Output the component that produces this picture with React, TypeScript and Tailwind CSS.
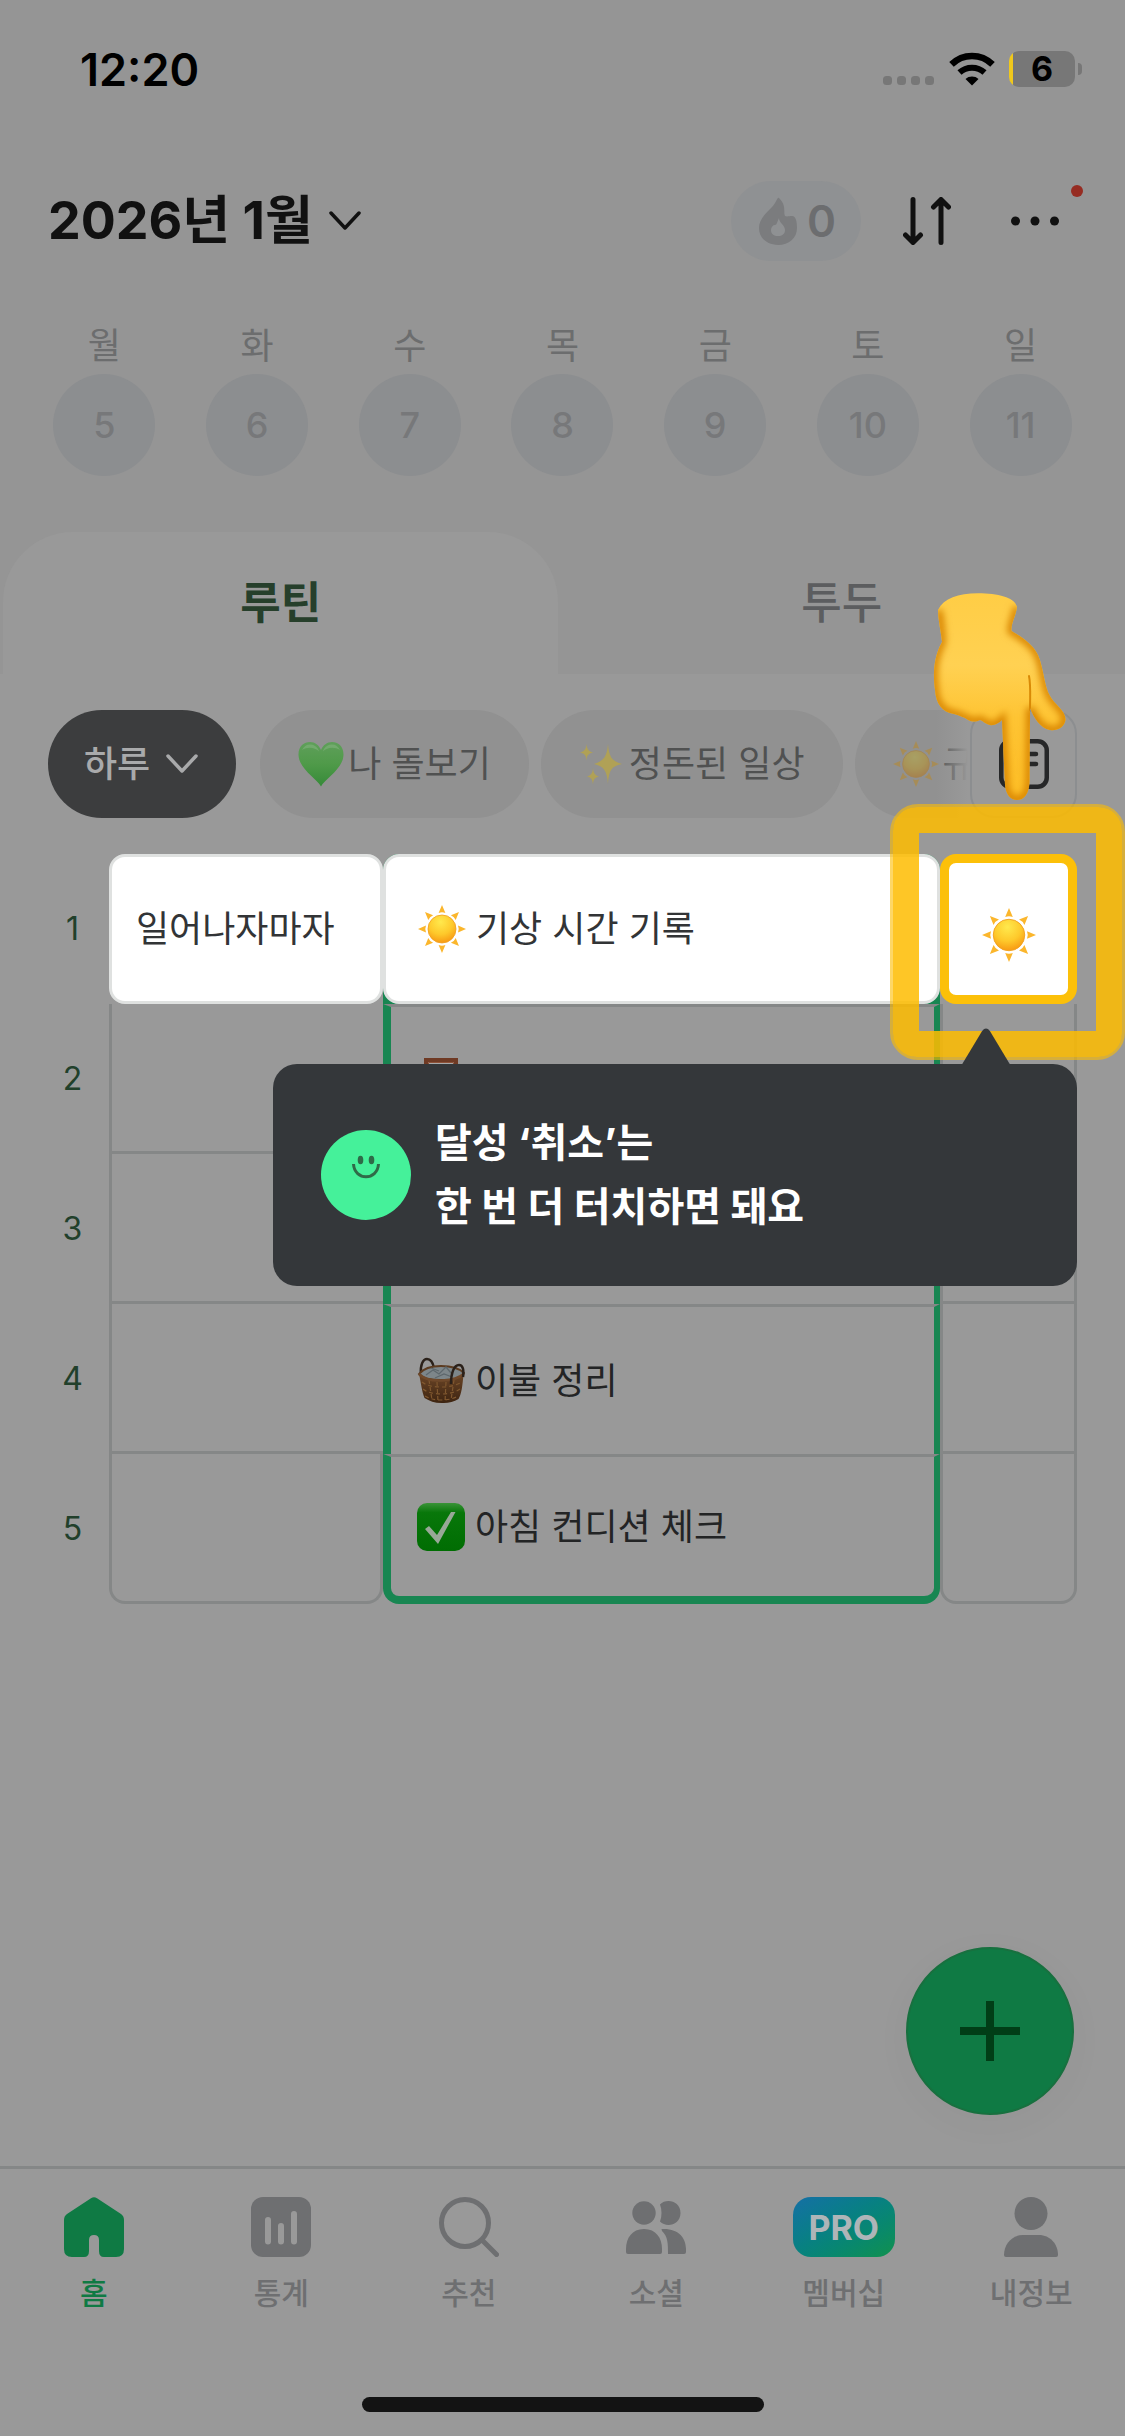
import { useId, useState, type ReactNode } from "react";

const DAYS = [
  { label: "월", date: 5 },
  { label: "화", date: 6 },
  { label: "수", date: 7 },
  { label: "목", date: 8 },
  { label: "금", date: 9 },
  { label: "토", date: 10 },
  { label: "일", date: 11 },
];

function Sun({ className }: { className?: string }) {
  const id = useId();
  return (
    <svg viewBox="0 0 48 48" className={className} aria-hidden="true">
      <defs>
        <radialGradient id={id} cx="0.45" cy="0.25" r="0.8">
          <stop offset="0" stopColor="#ffe94d" />
          <stop offset="0.55" stopColor="#fec92b" />
          <stop offset="1" stopColor="#f7930f" />
        </radialGradient>
      </defs>
      {[0, 45, 90, 135, 180, 225, 270, 315].map((deg) => (
        <path key={deg} d="M24 0 L27.4 8 Q24 6.6 20.6 8 Z" fill="#fbb62c" transform={`rotate(${deg} 24 24)`} />
      ))}
      <circle cx="24" cy="24" r="14" fill={`url(#${id})`} stroke="#f0a01f" strokeWidth="0.8" />
    </svg>
  );
}

function Heart({ className }: { className?: string }) {
  return (
    <svg viewBox="0 0 46 46" className={className} aria-hidden="true">
      <defs>
        <linearGradient id="heart" x1="0" y1="0" x2="0" y2="1">
          <stop offset="0" stopColor="#5f9f5a" />
          <stop offset="0.5" stopColor="#4f9a49" />
          <stop offset="1" stopColor="#358a38" />
        </linearGradient>
      </defs>
      <path
        d="M23 45.500C19 38 1 28 .5 14C.3 5 6 1 12 1c5 0 9 3 11 8c2-5 6-8 11-8c6 0 11.700 4 11.500 13C45 28 27 38 23 45.500Z"
        fill="url(#heart)"
      />
      <path d="M4 9c2-4 5-6 9-5.500c4 .5 7 3 8 7c-4-4-11-5-17-1.500ZM42 9c-2-4-5-6-9-5.500c-4 .5-7 3-8 7c4-4 11-5 17-1.500Z" fill="#82b27d" opacity="0.6" />
    </svg>
  );
}

function Sparkles({ className }: { className?: string }) {
  return (
    <svg viewBox="0 0 46 46" className={className} fill="#b0a156" aria-hidden="true">
      <path d="M29 3c1 12 3 17 14 20c-11 2-13 7-14 20c-1-13-4-18-14-20c10-3 13-8 14-20Z" />
      <path d="M7.500 3c.6 5 1.500 7 6.500 8.500c-5 1-6 3-6.500 8c-.6-5-1.500-7-6.500-8c5-1.500 6-3.500 6.500-8.500Z" />
      <path d="M14 27c.6 5 1.500 7 6 8.500c-4.500 1-5.500 3-6 8c-.6-5-1.500-7-6-8c4.500-1.500 5.500-3.500 6-8.500Z" />
    </svg>
  );
}

function Mirror() {
  return (
    <svg viewBox="0 0 48 48" className="size-12" aria-hidden="true">
      <path d="M9 3h30v42H9Z" fill="#a7a9a9" stroke="#6f3a24" strokeWidth="4" />
      <path d="M11.500 5.500h25v37h-25Z" fill="none" stroke="#8d5138" strokeWidth="1" />
    </svg>
  );
}

function Basket() {
  return (
    <svg viewBox="0 0 48 48" className="size-12" fill="none" aria-hidden="true">
      <defs>
        <linearGradient id="basket" x1="0" y1="0" x2="0" y2="1">
          <stop offset="0" stopColor="#6b4526" />
          <stop offset="1" stopColor="#3d2411" />
        </linearGradient>
      </defs>
      <path d="M4 17C3 8 6 2 10 2c4 0 6 4 7 9" stroke="#2b211a" strokeWidth="2.500" />
      <path d="M2 17c4-5 11-8 22-8c12 0 19 3 23 7c-2 6-12 8-23 7C13 23 5 21 2 17Z" fill="#7d868a" stroke="#5c3b20" strokeWidth="2" />
      <path d="M9 18l7-5 6 4 7-7 5 6M18 21l9-4 8 3M14 11l8 3" stroke="#5d676c" strokeWidth="1.200" />
      <path d="M2 17c5 5 13 7 23 6.500c10-.5 18-3 21.500-6.500c-1 12-2 20-5 25c-5 3-11 4.500-17 4c-7 0-12-2-17-5C5 35 4 26 2 17Z" fill="url(#basket)" />
      <path
        d="M5 25c5 4 12 5 20 5s15-2 20-5M6 32c5 4 12 5 19 5s14-2 18-5M8 39c5 3 10 4 17 4s13-2 16-4M12 23l3 20M20 25l1 20M29 25l-1 20M37 23l-3 20"
        stroke="#80582f"
        strokeWidth="1.200"
        strokeDasharray="4 3"
      />
      <path d="M2 17c5 5 13 7 23 6.500c10-.5 18-3 21.500-6.500" stroke="#70492a" strokeWidth="2.500" />
      <path d="M34 27C34 16 37 8 42 8c4 0 5 5 4 12" stroke="#2b211a" strokeWidth="2.500" />
    </svg>
  );
}

function CheckBadge() {
  return (
    <svg viewBox="0 0 48 48" className="size-12" aria-hidden="true">
      <defs>
        <linearGradient id="check" x1="0" y1="0" x2="0" y2="1">
          <stop offset="0" stopColor="#3a9338" />
          <stop offset="0.2" stopColor="#08770a" />
          <stop offset="1" stopColor="#006d02" />
        </linearGradient>
      </defs>
      <rect width="48" height="48" rx="10" fill="url(#check)" />
      <path d="M8 26l4-3 8 9L34 9h4.500L21 41Z" fill="#98a897" />
    </svg>
  );
}

function PointingHand({ className }: { className?: string }) {
  return (
    <svg viewBox="0 0 138 210" className={className} aria-hidden="true">
      <defs>
        <linearGradient id="palm" x1="0" y1="0" x2="0" y2="1">
          <stop offset="0" stopColor="#ffcd45" />
          <stop offset="0.35" stopColor="#ffd152" />
          <stop offset="0.6" stopColor="#fec433" />
          <stop offset="1" stopColor="#fdbd24" />
        </linearGradient>
        <filter id="soft" x="-20%" y="-20%" width="140%" height="140%">
          <feGaussianBlur stdDeviation="3.500" />
        </filter>
        <clipPath id="handShape">
          <path d="M8 18C14 6 28 1.500 48 1.300C68 1.500 84 5 87 14.700C86 24 81 31 81.500 39C92 45 103 52 108 63C114 77 114 94 120 104C125 113 136 119 135.500 128C134 136 127 139 120 138C110 136 104 126 100 116L99.500 190C99 202 94 208 87 208C80 208 76 202 75 193L72 128C69 131 64 134 60 133C55 132 52 128 50 128C46 130 42 130 38 128C34 125 30 124 24 122C12 120 6 112 5 98C3 84 3 66 12 50C11 39 8 28 8 18Z" />
        </clipPath>
      </defs>
      <g clipPath="url(#handShape)">
        <rect width="138" height="210" fill="url(#palm)" />
        <path
          d="M8 18C11 28 11 39 12 50C3 66 3 84 5 98C6 112 12 120 24 122C30 124 34 125 38 128C42 130 46 130 50 128C52 128 55 132 60 133C64 134 69 131 72 128L75 193C76 202 80 208 87 208C94 208 99 202 99.500 190L100 116C104 126 110 136 120 138C127 139 134 136 135.500 128C136 119 125 113 120 104C114 94 114 77 108 63C103 52 92 45 81.500 39C81 31 86 24 87 14.700"
          fill="none"
          stroke="#d88400"
          strokeWidth="8"
          filter="url(#soft)"
        />
        <path d="M100 118C100 104 101 94 99 84" fill="none" stroke="#d98a06" strokeWidth="2" strokeLinecap="round" />
      </g>
    </svg>
  );
}

function ChevronIcon({ className }: { className?: string }) {
  return (
    <svg viewBox="0 0 32 20" className={className} fill="none" stroke="currentColor" strokeWidth="3.500" strokeLinecap="round" strokeLinejoin="round" aria-hidden="true">
      <path d="M2 2l14 15L30 2" />
    </svg>
  );
}

function StatusBar() {
  return (
    <div className="flex h-[138px] items-center justify-between pr-[43px] pl-20 text-black">
      <span className="text-[45px] leading-none font-semibold">12:20</span>
      <div className="flex items-center">
        <svg viewBox="0 0 112 36" className="h-9 w-28" aria-hidden="true">
          <g fill="#777">
            <rect x="0" y="25" width="9" height="9" rx="3.500" />
            <rect x="14" y="25" width="9" height="9" rx="3.500" />
            <rect x="28" y="25" width="9" height="9" rx="3.500" />
            <rect x="42" y="25" width="9" height="9" rx="3.500" />
          </g>
          <path d="M89 34.500l-6.500-6.500c3.500-3.300 9.500-3.300 13 0Z" />
          <path d="M76.500 21.500c7-6.500 18-6.500 25 0" fill="none" stroke="#000" strokeWidth="6" />
          <path d="M68.500 13.300c11.500-11.200 29.500-11.200 41 0" fill="none" stroke="#000" strokeWidth="6.500" />
        </svg>
        <div className="ml-[14px] flex h-9 w-[66px] items-center justify-center rounded-[10px] bg-[linear-gradient(to_right,#f0c81c_4px,#777_4px)]">
          <span className="text-[34px] leading-none font-bold">6</span>
        </div>
        <span className="ml-[3px] h-3 w-1 rounded-r-full bg-[#777]" />
      </div>
    </div>
  );
}

function Header() {
  return (
    <header className="mt-[43px] flex h-20 items-center justify-between pr-[66px] pl-12 text-[#111]">
      <button type="button" className="flex items-center gap-4">
        <h1 className="text-[52px] leading-none font-bold">2026년 1월</h1>
        <ChevronIcon className="h-5 w-8" />
      </button>
      <div className="flex items-center">
        <button type="button" className="flex h-20 items-center gap-[10px] rounded-full bg-[#8f9193] pr-[25px] pl-7 text-[#6c6d6f]">
          <svg viewBox="0 0 38 48" className="h-12 w-[38px]" aria-hidden="true">
            <path
              d="M20 1c-2-1-2 4-7 9C6 17 0 23 0 31c0 10 8 17 19 17s19-7 19-17c0-6-1-12-5-12c-3 0-5 1-7 0c-2-4 2-10-6-18ZM20 21c0 5 6 7 6 12c0 4-3 6-7 6s-7-2-7-6c0-3 2-5 4-5c2 0 2-3 4-7Z"
              fill="#7b7c7e"
              fillRule="evenodd"
            />
          </svg>
          <span className="text-[44px] leading-none font-semibold">0</span>
        </button>
        <button type="button" aria-label="정렬" className="ml-[42px]">
          <svg viewBox="0 0 48 48" className="size-12" fill="none" stroke="currentColor" strokeWidth="5" strokeLinecap="round" strokeLinejoin="round">
            <path d="M10 2.500v42M2.500 38l7.500 7.500 7.500-7.500M38 45.500v-42M30.500 10L38 2.500l7.500 7.500" />
          </svg>
        </button>
        <button type="button" aria-label="더보기" className="relative ml-[60px]">
          <svg viewBox="0 0 48 48" className="size-12" fill="currentColor">
            <circle cx="4.500" cy="24" r="4.500" />
            <circle cx="24" cy="24" r="4.500" />
            <circle cx="43.500" cy="24" r="4.500" />
          </svg>
          <span className="absolute -top-3 -right-6 size-3 rounded-full bg-[#962c22]" />
        </button>
      </div>
    </header>
  );
}

function WeekStrip() {
  return (
    <div className="mt-[61px] grid grid-cols-7 px-7">
      {DAYS.map((day) => (
        <button type="button" key={day.date} className="flex flex-col items-center">
          <span className="text-4xl leading-12 text-[#6c6d6e]">{day.label}</span>
          <span className="mt-1 flex size-[102px] items-center justify-center rounded-full bg-[#8c8e90] text-4xl font-medium text-[#77787a]">
            {day.date}
          </span>
        </button>
      ))}
    </div>
  );
}

function Chip({ icon, children }: { icon: ReactNode; children: ReactNode }) {
  return (
    <button type="button" className="flex h-[108px] shrink-0 items-center gap-1 rounded-full bg-[#919191] px-[38px] text-4xl text-[#505151]">
      {icon}
      {children}
    </button>
  );
}

function FilterRow() {
  return (
    <div className="flex pr-12 pl-12">
      <button type="button" className="flex h-[108px] shrink-0 items-center gap-4 rounded-full bg-[#3c3d3e] pr-[38px] pl-9 text-4xl font-medium text-[#a9aaab]">
        하루
        <ChevronIcon className="h-5 w-8" />
      </button>
      <div className="relative ml-6 flex min-w-0 flex-1 gap-3 overflow-hidden">
        <Chip icon={<Heart className="size-[46px]" />}>나 돌보기</Chip>
        <Chip icon={<Sparkles className="size-[46px]" />}>정돈된 일상</Chip>
        <Chip icon={<Sun className="size-[46px] opacity-50 brightness-75" />}>규</Chip>
        <div className="absolute inset-y-0 right-0 w-8 bg-linear-to-r from-[#999]/0 to-[#999]" />
      </div>
      <button type="button" aria-label="메모" className="ml-[2px] flex h-[108px] w-[107px] shrink-0 items-center justify-center rounded-3xl border-2 border-[#8c8e90] text-[#262728]">
        <svg viewBox="0 0 50 50" className="size-[50px]" fill="none" stroke="currentColor" strokeWidth="4.500" strokeLinecap="round">
          <rect x="2.250" y="2.250" width="45.500" height="45.500" rx="9" />
          <path d="M13 15h24M13 25h24" />
        </svg>
      </button>
    </div>
  );
}

function RowNumber({ children }: { children: number }) {
  return (
    <th scope="row" className="p-0 pl-9 text-center text-[32px] font-normal text-[#21402b]">
      {children}
    </th>
  );
}

const ROUTINES = [
  { no: 2, icon: <Mirror />, title: "" },
  { no: 3, icon: null, title: "" },
  { no: 4, icon: <Basket />, title: "이불 정리" },
  { no: 5, icon: <CheckBadge />, title: "아침 컨디션 체크" },
];

function RoutineTable() {
  const [done, setDone] = useState(true);

  return (
    <table className="w-full table-fixed border-separate border-spacing-0 text-4xl text-[#232425]">
      <colgroup>
        <col className="w-[109px]" />
        <col className="w-[274px]" />
        <col />
        <col className="w-[137px]" />
      </colgroup>
      <tbody>
        <tr className="h-[150px] text-[#323436]">
          <RowNumber>{1}</RowNumber>
          <td className="p-0">
            <div className="flex h-[150px] items-center rounded-2xl border-3 border-[#dfe1e0] bg-white pl-6">일어나자마자</div>
          </td>
          <td className="rounded-t-2xl bg-[#188652] p-0">
            <div className="flex h-[150px] items-center gap-[10px] rounded-2xl border-3 border-[#dfe1e0] bg-white pl-8">
              <Sun className="size-12" />
              기상 시간 기록
            </div>
          </td>
          <td className="p-0">
            <button
              type="button"
              aria-label="기상 시간 기록"
              aria-pressed={done}
              onClick={() => setDone(!done)}
              className="flex h-[150px] w-full items-center justify-center rounded-2xl border-9 border-[#fcc009] bg-white pt-3"
            >
              {done && <Sun className="size-[54px]" />}
            </button>
          </td>
        </tr>
        {ROUTINES.map((routine, idx) => {
          const last = idx === ROUTINES.length - 1;
          return (
            <tr key={routine.no} className="h-[150px]">
              <RowNumber>{routine.no}</RowNumber>
              <td className={`border-b-3 border-l-3 border-[#858787] p-0 ${last ? "rounded-b-2xl border-r-3" : ""}`} />
              <td
                className={`border-t-3 border-r-6 border-l-8 border-[#188652] border-t-[#858787] p-0 ${
                  last ? "rounded-b-2xl border-b-8" : ""
                }`}
              >
                <div className="flex items-center gap-[10px] pl-[26px]">
                  {routine.icon}
                  {routine.title}
                </div>
              </td>
              <td className={`border-r-3 border-b-3 border-l-3 border-[#858787] p-0 ${last ? "rounded-b-2xl" : ""}`} />
            </tr>
          );
        })}
      </tbody>
    </table>
  );
}

function CoachTooltip() {
  return (
    <div role="tooltip" className="absolute top-[210px] right-0 left-[273px] flex h-[222px] items-center gap-6 rounded-3xl bg-[#34373a] pl-12 text-white">
      <svg viewBox="0 0 50 38" className="absolute right-[66px] bottom-full h-[37px] w-[50px] translate-y-px" fill="#34373a" aria-hidden="true">
        <path d="M0 38L21 3q4-5 8 0L50 38Z" />
      </svg>
      <svg viewBox="0 0 90 90" className="size-[90px] shrink-0" aria-hidden="true">
        <circle cx="45" cy="45" r="45" fill="#45f19a" />
        <ellipse cx="39.500" cy="30" rx="2.800" ry="4.300" fill="#2f6b48" />
        <ellipse cx="50.500" cy="30" rx="2.800" ry="4.300" fill="#2f6b48" />
        <path d="M32.500 34c1 17 24 17 25 0" fill="none" stroke="#2f6b48" strokeWidth="3" />
      </svg>
      <p className="text-[40px] leading-16 font-bold">
        달성 ‘취소’는
        <br />한 번 더 터치하면 돼요
      </p>
    </div>
  );
}

const NAV_ITEMS = [
  {
    label: "홈",
    icon: (
      <svg viewBox="0 0 60 60" className="size-15" fill="currentColor">
        <path d="M27 1.200q3-2 6 0L57 17q3 2 3 6v29q0 8-8 8H40q-5 0-5-6V43q0-5-5-5t-5 5v11q0 6-5 6H8q-8 0-8-8V23q0-4 3-6Z" />
      </svg>
    ),
  },
  {
    label: "통계",
    icon: (
      <svg viewBox="0 0 60 60" className="size-15">
        <rect width="60" height="60" rx="12" fill="currentColor" />
        <path d="M17 23v21.500M30 29v15.500M43 17v27.500" stroke="#999" strokeWidth="6" strokeLinecap="round" />
      </svg>
    ),
  },
  {
    label: "추천",
    icon: (
      <svg viewBox="0 0 60 60" className="size-15" fill="none" stroke="currentColor" strokeWidth="5" strokeLinecap="round">
        <circle cx="26" cy="26" r="23.500" />
        <path d="M43.500 43.500L57.500 57.500" />
      </svg>
    ),
  },
  {
    label: "소셜",
    icon: (
      <svg viewBox="0 0 60 60" className="size-15" fill="currentColor">
        <circle cx="18" cy="16" r="11.700" />
        <path d="M34 7.500c6-6.500 20.500-4 20.500 8.500s-14.500 15-20.500 8.500c2-5 2-12 0-17ZM18 32c12 0 18 9 18 20v3q0 2-2 2H2q-2 0-2-2v-3c0-11 6-20 18-20ZM35.500 32c17-1 24.500 9 24.500 20v3q0 2-2 2H42c0-11 0-17-6-23Z" />
      </svg>
    ),
  },
  {
    label: "멤버십",
    icon: (
      <span className="flex h-15 w-[102px] items-center justify-center rounded-[18px] bg-linear-to-br from-[#166fa5] to-[#12914c] text-[34px] font-bold text-[#aeb5b8]">
        PRO
      </span>
    ),
  },
  {
    label: "내정보",
    icon: (
      <svg viewBox="0 0 60 60" className="size-15" fill="currentColor">
        <circle cx="30" cy="16.500" r="16.500" />
        <path d="M22 38h16c11 0 19 9 19 20q0 2-2 2H5q-2 0-2-2c0-11 8-20 19-20Z" />
      </svg>
    ),
  },
];

function BottomNav() {
  return (
    <nav className="border-t-3 border-[#858787] bg-[#999] pt-7">
      <ul className="grid grid-cols-6">
        {NAV_ITEMS.map((item, idx) => (
          <li key={item.label}>
            <a href={`#${item.label}`} className={`flex flex-col items-center ${idx === 0 ? "text-[#0f7a44]" : "text-[#6e6f71]"}`}>
              {item.icon}
              <span className="mt-[18px] text-[30px] leading-9 font-medium">{item.label}</span>
            </a>
          </li>
        ))}
      </ul>
      <div className="mx-auto mt-[86px] mb-6 h-[15px] w-[402px] rounded-full bg-[#131313]" />
    </nav>
  );
}

export default function App() {
  const [tab, setTab] = useState("루틴");

  return (
    <div className="flex min-h-screen flex-col overflow-hidden bg-[#959595] font-['Inter','Noto_Sans_CJK_KR',sans-serif]">
      <StatusBar />
      <Header />
      <WeekStrip />

      {/* Routine / Todo tabs */}
      <div role="tablist" className="mt-14 grid grid-cols-[49fr_50fr] pl-[3px]">
        {["루틴", "투두"].map((name) => (
          <button
            key={name}
            type="button"
            role="tab"
            aria-selected={tab === name}
            onClick={() => setTab(name)}
            className={`h-[142px] rounded-t-[70px] text-[44px] ${
              tab === name ? "bg-[#999] font-bold text-[#263f2b]" : "font-medium text-[#5c5d5f]"
            }`}
          >
            {name}
          </button>
        ))}
      </div>

      <main className="flex flex-1 flex-col bg-[#999] pt-9">
        <FilterRow />
        <div className="relative mt-9 mr-12">
          <RoutineTable />

          {/* Coach mark */}
          <div className="pointer-events-none absolute -top-[50px] -right-12 h-[256px] w-[235px] rounded-[28px] border-3 border-[#febc00]/60">
            <div className="h-full rounded-[24px] border-[26px] border-[#febc00]/85" />
          </div>
          <PointingHand className="pointer-events-none absolute -top-[262px] right-[9px] h-[210px] w-[138px]" />
          <CoachTooltip />
        </div>

        <button
          type="button"
          aria-label="루틴 추가"
          className="mt-auto mr-[51px] mb-[51px] flex size-[168px] items-center justify-center self-end rounded-full border-2 border-[#18703f] bg-[#0f7a44] shadow-[0_8px_40px_rgba(0,0,0,0.03)]"
        >
          <svg viewBox="0 0 60 60" className="size-15" stroke="#013e17" strokeWidth="8">
            <path d="M30 0v60M0 30h60" />
          </svg>
        </button>
      </main>

      <BottomNav />
    </div>
  );
}
